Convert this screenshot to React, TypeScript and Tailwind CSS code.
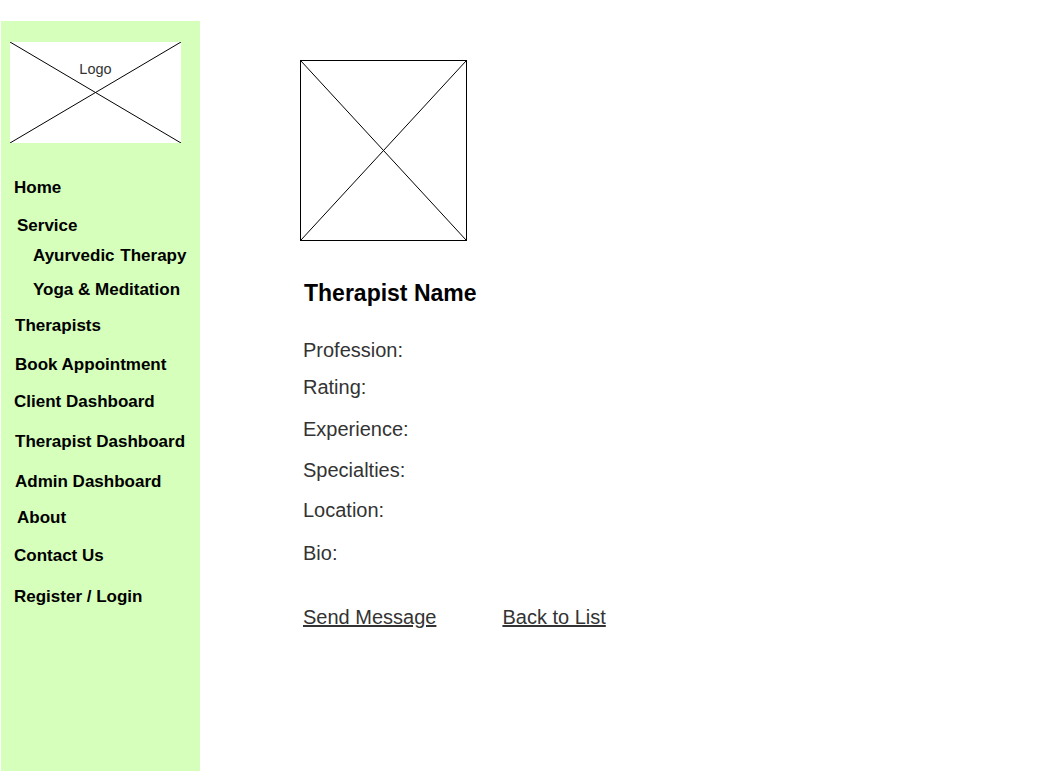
import React from 'react'

const navItems = [
  { label: 'Home', className: 'pl-[13px] mt-[35px]' },
  { label: 'Service', className: 'pl-[16px] mt-[18px]' },
  { label: 'Ayurvedic Therapy', className: 'pl-[32px] mt-[10px] [word-spacing:1px]' },
  { label: 'Yoga & Meditation', className: 'pl-[32px] mt-[14px]' },
  { label: 'Therapists', className: 'pl-[14px] mt-[16px]' },
  { label: 'Book Appointment', className: 'pl-[14px] mt-[19px]' },
  { label: 'Client Dashboard', className: 'pl-[13px] mt-[17px]' },
  { label: 'Therapist Dashboard', className: 'pl-[14px] mt-[20px]' },
  { label: 'Admin Dashboard', className: 'pl-[14px] mt-[20px]' },
  { label: 'About', className: 'pl-[16px] mt-[16px]' },
  { label: 'Contact Us', className: 'pl-[13px] mt-[18px]' },
  { label: 'Register / Login', className: 'pl-[13px] mt-[21px]' },
]

const fields = [
  { label: 'Profession:', className: 'mt-[32px]' },
  { label: 'Rating:', className: 'mt-[13px]' },
  { label: 'Experience:', className: 'mt-[18px]' },
  { label: 'Specialties:', className: 'mt-[17px]' },
  { label: 'Location:', className: 'mt-[16px]' },
  { label: 'Bio:', className: 'mt-[19px]' },
]

// placeholder cross, like a wireframe image
const Cross = () => (
  <svg className="absolute inset-0 w-full h-full" viewBox="0 0 100 100" preserveAspectRatio="none">
    <line x1="0" y1="0" x2="100" y2="100" stroke="#000" strokeWidth="1" vectorEffect="non-scaling-stroke" />
    <line x1="100" y1="0" x2="0" y2="100" stroke="#000" strokeWidth="1" vectorEffect="non-scaling-stroke" />
  </svg>
)

const App = () => {
  return (
    <div className="flex pt-[21px] bg-white min-h-[771px] font-['Liberation_Sans',Arial,sans-serif]">
      {/* Sidebar */}
      <aside className="ml-[1px] w-[199px] h-[750px] bg-[#d5ffbb] flex flex-col">
        <div className="relative ml-[9px] mt-[21px] w-[171px] h-[101px] bg-white">
          <Cross />
          <span className="absolute left-0 right-0 top-[18px] text-center text-[14.5px] leading-[18px] text-[#333]">
            Logo
          </span>
        </div>
        {navItems.map((item) => (
          <a key={item.label} className={`block text-[17px] leading-[20px] font-bold text-black ${item.className}`}>
            {item.label}
          </a>
        ))}
      </aside>

      {/* Main */}
      <main className="ml-[100px] mt-[39px] flex flex-col">
        <div className="relative w-[167px] h-[181px] border border-black">
          <Cross />
        </div>
        <h1 className="mt-[39px] ml-[4px] text-[23px] leading-[26px] font-bold text-black">Therapist Name</h1>
        {fields.map((f) => (
          <p key={f.label} className={`ml-[3px] text-[20px] leading-[24px] text-[#333] ${f.className}`}>
            {f.label}
          </p>
        ))}
        <div className="mt-[40px] ml-[3px] flex gap-[66px] text-[20px] leading-[24px] text-[#333]">
          <a className="underline">Send Message</a>
          <a className="underline">Back to List</a>
        </div>
      </main>
    </div>
  )
}

export default App
